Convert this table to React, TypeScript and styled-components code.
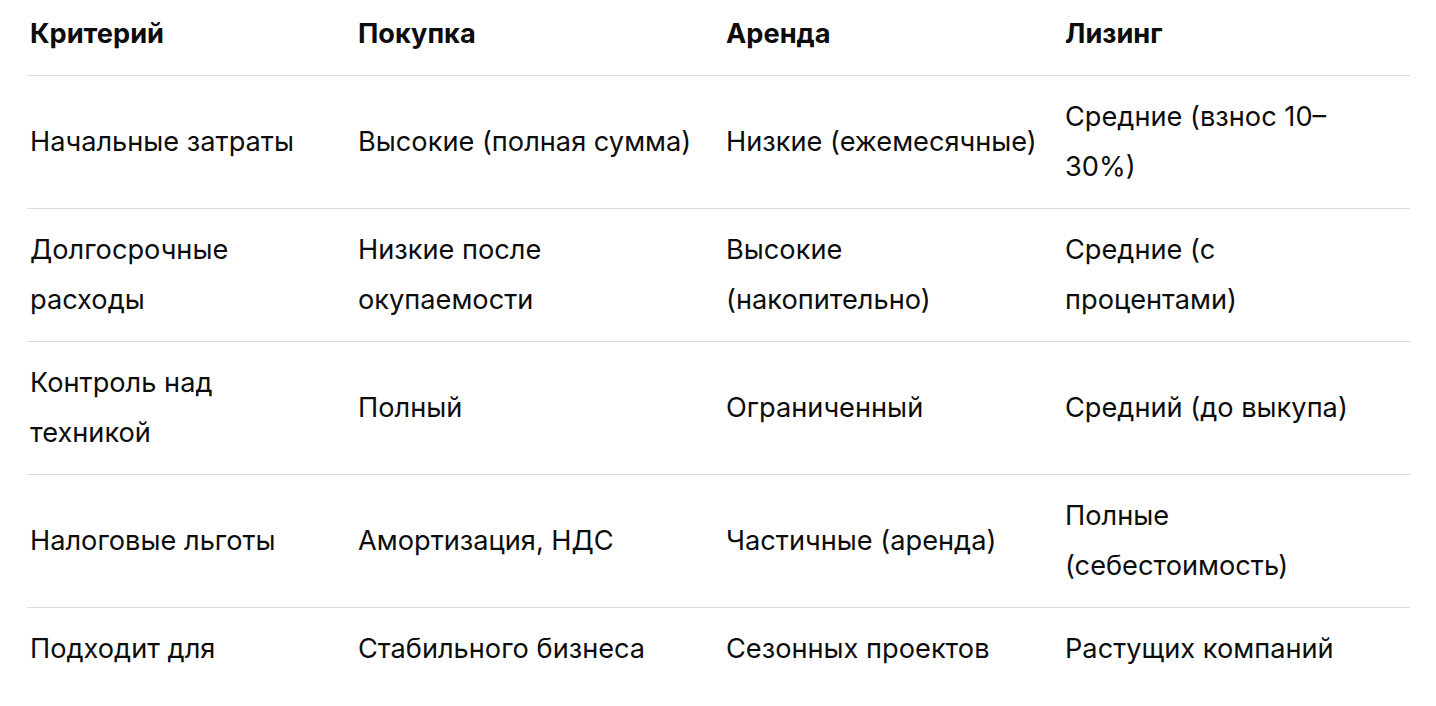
import styled, { createGlobalStyle } from "styled-components";

const GlobalStyle = createGlobalStyle`
  html, body {
    margin: 0;
    padding: 0;
    background: #ffffff;
  }
  body {
    font-family: Inter, "Noto Sans", sans-serif;
    color: #0d0d0d;
  }
`;

const Wrap = styled.div`
  padding: 0 26px 0 27px;
`;

const Table = styled.table`
  width: 1383px;
  border-collapse: collapse;
  table-layout: fixed;
  font-size: 27.2px;
  line-height: 50px;
`;

const Col = styled.col<{ $w: number }>`
  width: ${(p) => p.$w}px;
`;

const HeadCell = styled.th<{ $pr: number }>`
  text-align: left;
  font-weight: 700;
  padding: 9px ${(p) => p.$pr}px 16px 3px;
  border-bottom: 1px solid #d9dde3;
  vertical-align: middle;
`;

const Row = styled.tr<{ $last?: boolean }>`
  border-bottom: ${(p) => (p.$last ? "none" : "1px solid #d9dde3")};
`;

const Cell = styled.td<{ $pr: number }>`
  padding: 16px ${(p) => p.$pr}px 16px 3px;
  vertical-align: middle;
  font-weight: 400;
`;

const columns = [
  { title: "Критерий", width: 328, pr: 25 },
  { title: "Покупка", width: 368, pr: 25 },
  { title: "Аренда", width: 339, pr: 16 },
  { title: "Лизинг", width: 348, pr: 45 },
];

const rows = [
  ["Начальные затраты", "Высокие (полная сумма)", "Низкие (ежемесячные)", "Средние (взнос 10–30%)"],
  ["Долгосрочные расходы", "Низкие после окупаемости", "Высокие (накопительно)", "Средние (с процентами)"],
  ["Контроль над техникой", "Полный", "Ограниченный", "Средний (до выкупа)"],
  ["Налоговые льготы", "Амортизация, НДС", "Частичные (аренда)", "Полные (себестоимость)"],
  ["Подходит для", "Стабильного бизнеса", "Сезонных проектов", "Растущих компаний"],
];

export default function App() {
  return (
    <>
      <GlobalStyle />
      <Wrap>
        <Table>
          <colgroup>
            {columns.map((c) => (
              <Col key={c.title} $w={c.width} />
            ))}
          </colgroup>
          <thead>
            <tr>
              {columns.map((c) => (
                <HeadCell key={c.title} $pr={c.pr}>
                  {c.title}
                </HeadCell>
              ))}
            </tr>
          </thead>
          <tbody>
            {rows.map((r, i) => (
              <Row key={r[0]} $last={i === rows.length - 1}>
                {r.map((v, j) => (
                  <Cell key={j} $pr={columns[j].pr}>
                    {v}
                  </Cell>
                ))}
              </Row>
            ))}
          </tbody>
        </Table>
      </Wrap>
    </>
  );
}
